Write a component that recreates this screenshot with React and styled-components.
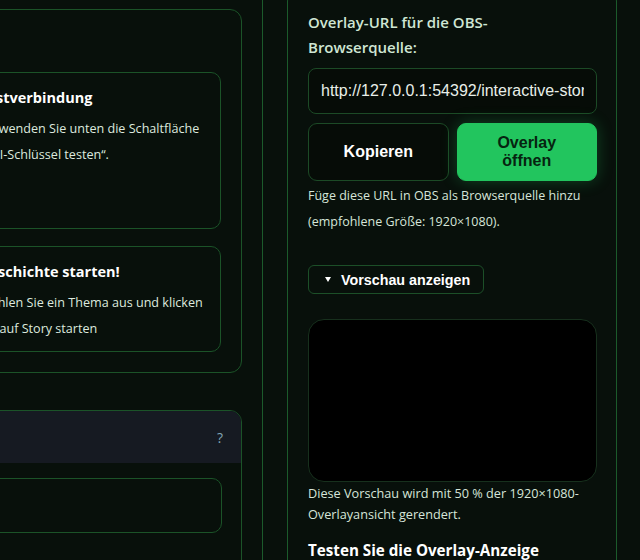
import React from "react";
import styled, { createGlobalStyle } from "styled-components";

const Global = createGlobalStyle`
  html, body { margin: 0; padding: 0; background: #08100b; }
  body { font-family: "Open Sans", "Noto Sans", sans-serif; color: #d6e5d9; }
  * { box-sizing: border-box; }
`;

const Viewport = styled.div`
  width: 640px;
  height: 560px;
  overflow: hidden;
  background: #08100b;
`;

const Layout = styled.div`
  display: grid;
  grid-template-columns: 303px 380px;
  column-gap: 20px;
  align-items: start;
  margin-left: -61px;
`;

const LeftColumn = styled.div`
  display: flex;
  flex-direction: column;
  gap: 37px;
  padding-top: 9px;
`;

const Card = styled.section`
  border: 1px solid #1b5328;
  border-radius: 12px;
  background: #08100b;
  overflow: hidden;
`;

const CardBody = styled.div`
  display: flex;
  flex-direction: column;
  gap: ${(p) => p.$gap || 17}px;
  padding: ${(p) => p.$pad};
`;

const StepCard = styled.div`
  border: 1px solid #1b5328;
  border-radius: 10px;
  padding: 14px 18px 9px;
  min-height: ${(p) => p.$minHeight || 0}px;
`;

const StepTitle = styled.h3`
  margin: 0 0 7px;
  font-size: 14.5px;
  line-height: 22px;
  font-weight: 700;
  color: #ffffff;
  white-space: nowrap;
`;

const StepText = styled.p`
  margin: 0;
  font-size: 12.6px;
  line-height: 26px;
  color: #dde9df;
  white-space: nowrap;
`;

const HelpHeader = styled.header`
  display: flex;
  justify-content: flex-end;
  align-items: center;
  height: 52px;
  padding: 0 18px;
  background: #161a22;
`;

const HelpMark = styled.span`
  font-size: 14px;
  color: #82a6b6;
  cursor: help;
`;

const EmptyField = styled.div`
  height: 55px;
  border: 1px solid #1b5328;
  border-radius: 10px;
`;

const RightColumn = styled.div`
  margin-top: -36px;
`;

const OuterPanel = styled.div`
  border: 1px solid #1b5a2b;
  border-radius: 12px;
  padding: 24px;
`;

const InnerPanel = styled.div`
  border: 1px solid #1b5a2b;
  border-radius: 12px;
  padding: 20px 19px 20px 20px;
  display: flex;
  flex-direction: column;
`;

const FieldLabel = styled.label`
  max-width: 240px;
  font-size: 15px;
  line-height: 25px;
  font-weight: 600;
  color: #cfe6d4;
`;

const UrlInput = styled.input`
  margin-top: 8px;
  height: 46px;
  width: 100%;
  padding: 0 12px;
  border: 1px solid #1c4a26;
  border-radius: 8px;
  background: #060c07;
  color: #e8efe9;
  font-family: "Liberation Sans", Arial, sans-serif;
  font-size: 16px;
  outline: none;
`;

const ButtonRow = styled.div`
  margin-top: 9px;
  display: grid;
  grid-template-columns: 1fr 1fr;
  gap: 8px;
`;

const ActionButton = styled.button`
  height: 58px;
  border-radius: 9px;
  font-family: "Liberation Sans", Arial, sans-serif;
  font-size: 16px;
  font-weight: 700;
  line-height: 18.5px;
  cursor: pointer;
  border: 1px solid ${(p) => (p.$primary ? "#22c55e" : "#1c4a26")};
  background: ${(p) => (p.$primary ? "#22c55e" : "#060c07")};
  color: ${(p) => (p.$primary ? "#062410" : "#ffffff")};
  box-shadow: ${(p) => (p.$primary ? "0 0 16px rgba(34, 197, 94, 0.3)" : "none")};
`;

const Note = styled.p`
  margin: ${(p) => p.$margin || "2px 0 0"};
  font-size: ${(p) => p.$size || 12.5}px;
  line-height: ${(p) => p.$lh || 26}px;
  color: #d6e5d9;
`;

const ToggleButton = styled.button`
  align-self: flex-start;
  margin-top: 30px;
  height: 29px;
  display: inline-flex;
  align-items: center;
  gap: 10px;
  padding: 0 13px 0 16px;
  border: 1px solid #1c4f28;
  border-radius: 6px;
  background: transparent;
  color: #ffffff;
  font-family: "Liberation Sans", Arial, sans-serif;
  font-size: 14.3px;
  font-weight: 700;
  cursor: pointer;
`;

const Caret = styled.span`
  width: 0;
  height: 0;
  border-left: 3.5px solid transparent;
  border-right: 3.5px solid transparent;
  border-top: 5px solid #ffffff;
`;

const PreviewFrame = styled.div`
  margin-top: 25px;
  width: 100%;
  aspect-ratio: 16 / 9;
  background: #000000;
  border: 1px solid #17301d;
  border-radius: 16px;
`;

const SectionHeading = styled.h2`
  margin: 12px 0 0;
  font-size: 15.2px;
  line-height: 24px;
  font-weight: 700;
  color: #ffffff;
  white-space: nowrap;
`;

export default function App() {
  return (
    <>
      <Global />
      <Viewport>
        <Layout>
          <LeftColumn>
            <Card>
              <CardBody $pad="62px 20px 20px">
                <StepCard $minHeight={157}>
                  <StepTitle>Testverbindung</StepTitle>
                  <StepText>Verwenden Sie unten die Schaltfläche</StepText>
                  <StepText>„API-Schlüssel testen“.</StepText>
                </StepCard>
                <StepCard>
                  <StepTitle>Geschichte starten!</StepTitle>
                  <StepText>Wählen Sie ein Thema aus und klicken</StepText>
                  <StepText>Sie auf Story starten</StepText>
                </StepCard>
              </CardBody>
            </Card>
            <Card>
              <HelpHeader>
                <HelpMark title="Hilfe">?</HelpMark>
              </HelpHeader>
              <CardBody $pad="15px 19px 40px">
                <EmptyField />
              </CardBody>
            </Card>
          </LeftColumn>

          <RightColumn>
            <OuterPanel>
              <InnerPanel>
                <FieldLabel htmlFor="overlay-url">
                  Overlay-URL für die OBS-Browserquelle:
                </FieldLabel>
                <UrlInput
                  id="overlay-url"
                  readOnly
                  value="http://127.0.0.1:54392/interactive-story/overlay"
                />
                <ButtonRow>
                  <ActionButton>Kopieren</ActionButton>
                  <ActionButton $primary>
                    Overlay
                    <br />
                    öffnen
                  </ActionButton>
                </ButtonRow>
                <Note>
                  Füge diese URL in OBS als Browserquelle hinzu (empfohlene
                  Größe: 1920×1080).
                </Note>
                <ToggleButton>
                  <Caret />
                  Vorschau anzeigen
                </ToggleButton>
                <PreviewFrame />
                <Note $margin="1px 0 0" $lh={21.5} $size={12.7}>
                  Diese Vorschau wird mit 50 % der 1920×1080-Overlayansicht
                  gerendert.
                </Note>
                <SectionHeading>Testen Sie die Overlay-Anzeige</SectionHeading>
              </InnerPanel>
            </OuterPanel>
          </RightColumn>
        </Layout>
      </Viewport>
    </>
  );
}
